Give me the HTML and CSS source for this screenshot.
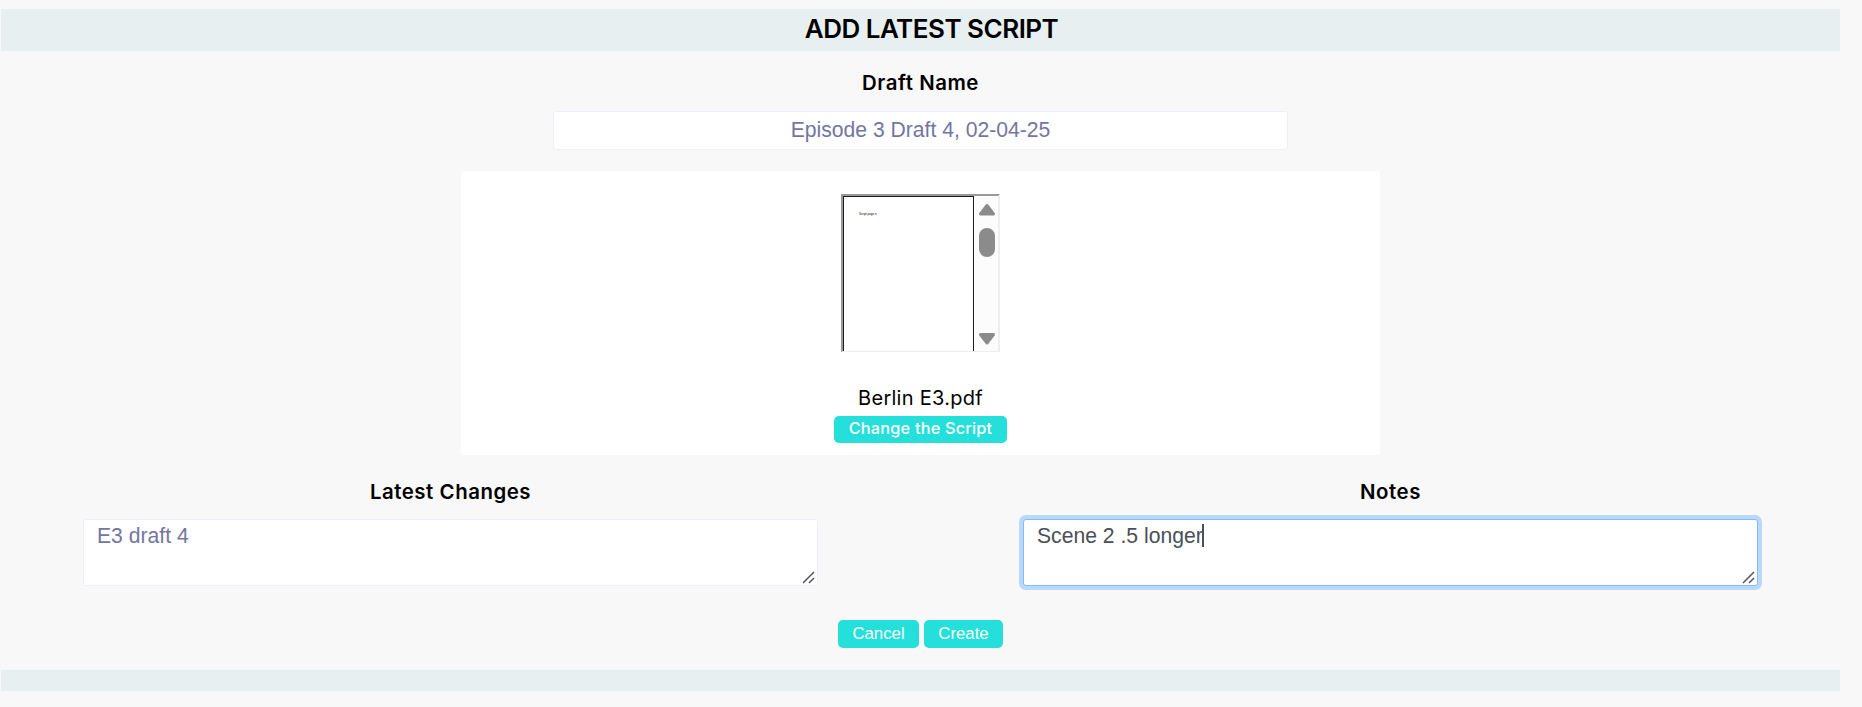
FILE: index.html
```html
<!DOCTYPE html>
<html lang="en">
<head>
<meta charset="utf-8">
<title>Add Latest Script</title>
<link rel="stylesheet" href="styles.css">
</head>
<body>
<main class="page">
  <h1 class="title"><span>ADD LATEST SCRIPT</span></h1>
  <h2 class="label label-draft"><span>Draft Name</span></h2>
  <div class="draft-input"><span>Episode 3 Draft 4, 02-04-25</span></div>
  <section class="card">
    <div class="preview">
      <div class="paper"><span class="paper-text">Script page n</span></div>
      <svg class="scroll" width="24" height="155" viewBox="0 0 24 155">
        <g fill="#8b8b8b" stroke="#8b8b8b" stroke-width="3" stroke-linejoin="round">
          <path d="M13 9.500 19.500 18H6.500Z"/>
          <path d="M13 147 19.500 138.500H6.500Z"/>
        </g>
        <rect x="5" y="32" width="16" height="29" rx="8" fill="#8b8b8b"/>
      </svg>
    </div>
    <div class="filename"><span>Berlin E3.pdf</span></div>
    <button class="btn btn-change"><span>Change the Script</span></button>
  </section>
  <div class="fields">
    <div class="field">
      <h2 class="label label-changes"><span>Latest Changes</span></h2>
      <div class="area"><span>E3 draft 4</span>
        <svg class="grip" width="13" height="13" viewBox="0 0 13 13"><path d="M1 12 12 1M7 12 12 7" stroke="#555" stroke-width="1.500" fill="none"/></svg>
      </div>
    </div>
    <div class="field">
      <h2 class="label label-notes"><span>Notes</span></h2>
      <div class="area area-focus"><span>Scene 2 .5 longer</span><i class="caret"></i>
        <svg class="grip" width="13" height="13" viewBox="0 0 13 13"><path d="M1 12 12 1M7 12 12 7" stroke="#555" stroke-width="1.500" fill="none"/></svg>
      </div>
    </div>
  </div>
  <div class="actions">
    <button class="btn btn-cancel"><span>Cancel</span></button>
    <button class="btn btn-create"><span>Create</span></button>
  </div>
  <footer class="band"></footer>
</main>
</body>
</html>
```
FILE: styles.css
```css
* { box-sizing: border-box; }
body {
  margin: 0;
  background: #f8f8f8;
  color: #000;
  font-family: Inter, "Liberation Sans", sans-serif;
}
.page {
  width: 1839px;
  margin-left: 1px;
  padding-top: 9px;
  display: flex;
  flex-direction: column;
}
.title {
  margin: 0;
  height: 42px;
  padding-left: 22px;
  background: #e7eff1;
  font-size: 26px;
  font-weight: 600;
  line-height: 39px;
  letter-spacing: -0.5px;
  text-align: center;
}
.label {
  margin: 0;
  font-size: 20.4px;
  font-weight: 600;
  line-height: 26px;
  letter-spacing: 0.55px;
  text-align: center;
}
.label-draft { margin-top: 19px; }
.draft-input {
  align-self: center;
  width: 735px;
  height: 39px;
  margin-top: 15px;
  background: #fff;
  border: 1px solid #efeff8;
  border-radius: 3px;
  color: #7476a0;
  font: 21.15px/36px "Liberation Sans", Arial, sans-serif;
  text-align: center;
}
.card {
  align-self: center;
  width: 919px;
  height: 284px;
  margin-top: 21px;
  padding-top: 23px;
  background: #fff;
  border-radius: 3px;
  display: flex;
  flex-direction: column;
  align-items: center;
}
.preview {
  display: flex;
  width: 159px;
  height: 158px;
  border: solid;
  border-width: 2px 2px 1px 2px;
  border-color: #999 #eee #eee #999;
  background: #fcfcfc;
}
.paper {
  width: 131px;
  height: 155px;
  border: 1px solid #1c1c1c;
  border-bottom: 0;
  background: #fff;
  padding: 15px 0 0 15px;
  line-height: 4px;
}
.paper-text { display: block; font: 3px/4px "Liberation Sans", sans-serif; }
.scroll { display: block; }
.filename {
  margin-top: 32px;
  font-size: 20px;
  line-height: 28px;
  letter-spacing: 0.27px;
}
.btn {
  border: 0;
  padding: 0;
  border-radius: 5px;
  background: #25dfda;
  color: #fff;
  font: 16.8px/25px "Liberation Sans", Arial, sans-serif;
  text-align: center;
}
.btn-change {
  width: 173px;
  height: 27px;
  margin-top: 4px;
  padding-bottom: 2px;
  font-family: Inter, sans-serif;
  font-size: 16.3px;
  font-weight: 500;
  letter-spacing: 0.2px;
}
.fields {
  display: grid;
  grid-template-columns: 735px 735px;
  gap: 205px;
  margin: 24px 0 0 82px;
}
.area {
  position: relative;
  height: 67px;
  margin-top: 14px;
  padding: 2px 13px;
  background: #fff;
  border: 1px solid #efeff8;
  border-radius: 3px;
  color: #7476a0;
  font: 21.15px/28px "Liberation Sans", Arial, sans-serif;
}
.area-focus {
  border-color: #80bdff;
  box-shadow: 0 0 0 4px #b9d8fa;
  color: #495057;
}
.caret {
  display: inline-block;
  width: 2px;
  height: 23px;
  margin-left: -1px;
  background: #495057;
  vertical-align: -4px;
}
.grip { position: absolute; right: 2px; bottom: 1px; }
.actions {
  display: flex;
  justify-content: center;
  gap: 5px;
  margin-top: 34px;
}
.btn-cancel, .btn-create { height: 28px; padding-bottom: 1px; }
.btn-cancel { width: 81px; }
.btn-create { width: 79px; }
.band { height: 21px; margin-top: 22px; background: #e7eff1; }
```
